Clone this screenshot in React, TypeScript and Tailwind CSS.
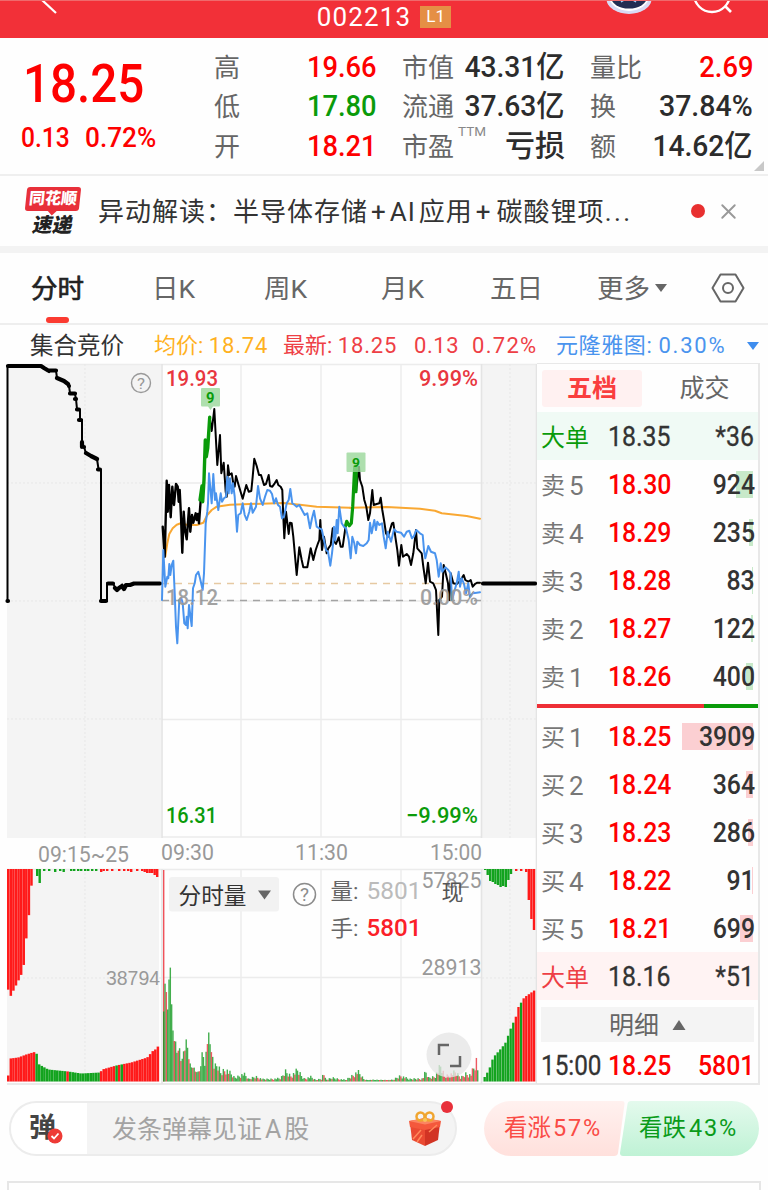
import React from 'react';
import { X } from 'lucide-react';
import clsx from 'clsx';

interface OrderRow {
  label: string;
  level: string;
  price: string;
  volume: string;
  bar: number;
}

const asks: OrderRow[] = [
  { label: '卖', level: '5', price: '18.30', volume: '924', bar: 17 },
  { label: '卖', level: '4', price: '18.29', volume: '235', bar: 4 },
  { label: '卖', level: '3', price: '18.28', volume: '83', bar: 1 },
  { label: '卖', level: '2', price: '18.27', volume: '122', bar: 2 },
  { label: '卖', level: '1', price: '18.26', volume: '400', bar: 7 },
];

const bids: OrderRow[] = [
  { label: '买', level: '1', price: '18.25', volume: '3909', bar: 71 },
  { label: '买', level: '2', price: '18.24', volume: '364', bar: 7 },
  { label: '买', level: '3', price: '18.23', volume: '286', bar: 5 },
  { label: '买', level: '4', price: '18.22', volume: '91', bar: 1 },
  { label: '买', level: '5', price: '18.21', volume: '699', bar: 13 },
];

// Price series are stored at three units per pixel, relative to (originX, 360)
const toPoints = (data: string, originX: number) =>
  data
    .trim()
    .split(/\s+/)
    .map(pair => {
      const [x, y] = pair.split(',').map(Number);
      return `${(originX + x / 3).toFixed(1)},${(360 + y / 3).toFixed(1)}`;
    })
    .join(' ');

const priceA = toPoints(
  '38,500 44,590 50,362 53,455 57,375 62,472 67,380 72,435 78,372 83,380 86,425 89,390 93,470 97,578 101,455 105,510 110,538 117,445 121,515 126,465 130,488 137,460 140,480 144,462 147,490 152,420',
  150
);
const riseA = toPoints('150,420 156,378 158,425 162,360 166,240 169,290 173,265 179,172', 150);
const priceB = toPoints(
  '179,172 185,213 193,147 202,315 210,225 214,340 221,308 227,395 230,410 234,316 238,345 245,340 250,370 254,380 258,348 265,372 278,416 289,375 296,395 304,393 308,350 313,296 320,318 327,345 333,345 342,375 348,372 356,345 360,378 367,380 374,370 380,360 385,375 392,380 397,390 400,470 403,535 408,455 416,522 420,488 425,490 430,530 440,645 448,562 455,600 460,622 472,622 482,565 490,600 497,570 504,550 508,540 511,480 516,570 522,530 530,580 535,565 542,555 548,505 553,545 558,552 566,532 572,560 578,560 586,505',
  150
);
const riseB = toPoints('76,500 80,484 88,497 94,490 98,440 104,320 108,395 109,320', 320);
const priceC = toPoints(
  '108,395 117,320 120,360 127,380 133,420 139,440 145,480 150,460 157,390 161,435 170,432 178,430 182,413 187,450 192,480 198,520 204,530 210,510 216,490 220,488 226,530 232,570 237,617 244,555 249,590 260,582 267,590 273,615 280,580 288,510 292,565 305,580 310,620 317,670 324,608 330,665 340,670 348,690 355,825 358,720 366,710 371,615 377,640 384,670 388,720 392,640 400,670 410,672 418,665 425,655 431,645 436,660 445,665 452,660 458,680 465,672 472,668 480,668',
  320
);
const compareA = toPoints(
  '36,720 40,570 46,680 52,650 55,655 58,612 61,645 65,615 70,602 74,700 78,800 82,850 88,720 94,715 98,730 103,790 108,795 110,770 113,805 117,735 125,798 129,685 134,670 138,645 145,635 150,655 158,690 162,640 167,490 172,455 174,430 177,340 185,430 190,342 195,420 198,400 205,450 212,400 216,425 222,415 228,410 232,350 236,400 240,355 245,400 249,370 254,410 261,515 265,465 272,460 278,430 284,465 290,480 298,455 303,430 308,458 318,440 324,378 330,415 338,435 345,410 352,390 360,392 366,402 372,430 378,415 384,435 390,440 396,475 402,470 410,430 416,420 421,387 427,430 434,435 440,440 448,435 456,450 464,465 472,460 480,505 486,475 492,452 500,500 508,505 515,508 520,530 528,570 534,575 541,617 546,580 550,545 552,500 556,540 560,480 563,520 568,440 575,490 582,500 588,505',
  150
);
const compareB = toPoints(
  '78,505 86,540 92,595 97,530 103,550 108,580 112,545 120,555 130,558 140,550 146,540 150,488 155,520 163,480 168,510 172,485 178,495 186,490 191,530 197,565 203,515 213,545 222,508 230,515 243,518 252,530 260,515 268,512 276,535 282,528 289,510 300,520 308,525 312,570 316,595 325,558 333,575 345,580 350,600 356,650 362,610 367,635 376,622 385,630 392,640 396,720 404,690 410,670 416,635 420,680 425,655 432,672 438,700 445,670 450,712 458,700 470,698 480,697',
  320
);
const averageA = toPoints(
  '46,590 52,550 58,522 68,505 80,494 92,490 110,494 140,495 160,488 172,465 185,450 200,440 240,434 300,432 400,429 450,434 500,440 600,443',
  150
);
const averageB = toPoints('90,443 200,441 300,446 345,452 365,460 440,468 480,476', 320);

const auctionLine =
  '7.5,601 7.5,366 41,366 44,368 48,370.5 56,370.5 57,378 64,381 69,386 70,393 75,394 76,399 77,409 80,410 80,420 82,420 82,442 84,447 86,453 91,456 97,459 98.5,469 101,470 101,601 107,601 107,583.5 113,583.5 116,589 120,588 122,585 124,589 128,585 135,583.5 161,583.5';
const auctionMarks = [
  'M8 366H41L44 368L49 371',
  'M48 370.5H56',
  'M57 378L64 381L68 384',
  'M69 386V386',
  'M70 393.5H75',
  'M75 399H76',
  'M77 409.5H79',
  'M79 420H81',
  'M82 442V447',
  'M84 447V447',
  'M86 453L91 456L97 459',
  'M98 469.5H100',
  'M101 601H106',
  'M108 583.5H113',
  'M115 588L117 590L119 588L122 586L124 589L126 585H130L134 583.5H160',
  'M483 583.5H535',
  'M7.5 601H8',
];

type Anchor = [number, number];

const heightAt = (anchors: Anchor[], x: number) => {
  for (let i = 1; i < anchors.length; i++) {
    const [x1, h1] = anchors[i];
    const [x0, h0] = anchors[i - 1];
    if (x <= x1) return h0 + ((h1 - h0) * (x - x0)) / (x1 - x0);
  }
  return anchors[anchors.length - 1][1];
};

const RED = '#ff1a1a';
const GREEN = '#12a31e';

const volumeAnchors: Anchor[] = [
  [163, 70], [165, 112], [166.5, 60], [168, 98], [169.5, 118], [170.5, 85], [172, 59], [174, 50], [176, 32],
  [178, 43], [181, 18], [183, 34], [186, 44], [190, 15], [192, 18], [196, 9], [200, 14], [202, 40], [204, 15],
  [206, 42], [207.5, 55], [209, 45], [211, 38], [214, 18], [217, 22], [220, 12], [225, 17], [230, 10], [234, 5],
  [243, 10], [248, 3], [255, 7], [262, 3], [280, 4], [285, 14], [290, 8], [297, 15], [303, 4], [310, 6], [315, 2],
  [321, 4], [323, 12], [325, 2], [332, 5], [345, 2], [357, 13], [364, 2], [385, 2], [392, 2], [400, 8], [408, 3],
  [415, 4], [422, 4], [425, 13], [428, 5], [434, 7], [440, 20], [444, 7], [455, 12], [460, 5], [465, 11],
  [470, 9], [474, 20], [476, 27], [478, 6],
];

const volumeBars = Array.from({ length: 238 }, (_, i) => {
  const x = 163 + i * 1.325;
  const noise = ((i * 7919) % 97) / 97;
  const scale = x < 172 ? 1 : x < 212 ? 0.75 + noise * 0.28 : 0.4 + noise * 0.6;
  const green = x < 440 ? noise > 0.42 || i % 5 === 0 : i % 3 === 0;
  return {
    x,
    h: Math.max(1.5, heightAt(volumeAnchors, x) * scale),
    color: green ? '#149a22' : '#e8303a',
  };
});

const auctionTop: Anchor[] = [[7, 117], [10, 128], [15, 118], [20, 108], [23, 101], [25, 80], [28, 50], [30, 38], [32, 3]];
const auctionBase: Anchor[] = [
  [7, 6], [9, 23], [17, 24], [25, 27], [35, 30], [36, 24], [38, 17], [47, 12], [67, 10], [80, 8], [99, 9],
  [101, 12], [115, 16], [130, 19], [146, 24], [152, 31], [156, 33], [158, 39],
];
const closeBase: Anchor[] = [
  [483, 2], [489, 12], [493, 24], [500, 32], [505, 38], [508, 46], [512, 57], [515, 62], [518, 74], [521, 79],
  [524, 84], [534, 91],
];

const auctionBars = Array.from({ length: 59 }, (_, i) => {
  const x = 7 + i * 2.58;
  let color = RED;
  if ((x > 34 && x < 99) || (x > 113 && x < 122)) color = GREEN;
  if ((x > 66 && x < 68.6) || (x > 116 && x < 118.5)) color = RED;
  return { x, h: heightAt(auctionBase, x), color };
});

const closeBars = Array.from({ length: 20 }, (_, i) => {
  const x = 483.5 + i * 2.6;
  const red = (x > 513 && x < 519) || x > 522;
  return { x, h: heightAt(closeBase, x + 1), color: red ? RED : GREEN };
});

const ticks: [number, number, string][] = [
  [36, 7, GREEN], [38.5, 14, GREEN], [43, 2, GREEN], [48, 2, GREEN], [54, 3, GREEN], [59, 2, GREEN], [62.5, 3, GREEN],
  [70, 2, GREEN], [73, 2, GREEN], [77, 2, GREEN], [80, 2, GREEN], [84, 2, GREEN], [87, 2, GREEN], [91, 2, GREEN],
  [95, 2, GREEN], [100, 3, RED], [102.5, 2, RED], [106, 2, RED], [111, 2, RED], [118, 2, RED], [123, 2, RED],
  [127, 2, RED], [130, 3, RED], [136, 2, RED], [141, 2, RED], [143.5, 3, RED], [146, 4, RED], [148.5, 4, RED],
  [151, 4, RED], [153.5, 6, RED], [156, 8, RED],
  [484, 1, GREEN], [486.5, 6, GREEN], [489, 12, GREEN], [491.6, 13, GREEN], [494.2, 15, GREEN], [496.8, 16, GREEN],
  [499.4, 18, GREEN], [502, 17, GREEN], [504.6, 18, GREEN], [507.2, 11, GREEN], [509.8, 5, GREEN], [515, 2, RED],
  [520, 2, RED], [525, 3, RED], [527.6, 31, RED], [530.2, 50, RED], [532.8, 61, RED],
];

interface ChartLabelProps {
  x: number;
  y: number;
  width: number;
  fill: string;
  size?: number;
  weight?: number;
  family?: string;
  children: string;
}

const ChartLabel: React.FC<ChartLabelProps> = ({ x, y, width, fill, size = 22, weight = 400, family, children }) => (
  <text
    x={x}
    y={y}
    textLength={width}
    lengthAdjust="spacingAndGlyphs"
    fill={fill}
    fontSize={size}
    fontWeight={weight}
    fontFamily={family ?? 'Roboto, "Noto Sans CJK SC", sans-serif'}
  >
    {children}
  </text>
);

const PriceChart: React.FC = () => (
  <svg className="block shrink-0" width="537" height="722" viewBox="0 363 537 722" fill="none">
    {/* Panels and grid */}
    <rect x="7" y="364" width="154" height="474" fill="#f4f4f4" />
    <rect x="482" y="364" width="54" height="474" fill="#f4f4f4" />
    <rect x="7" y="869" width="152" height="213" fill="#f4f4f4" />
    <rect x="482" y="869" width="54" height="213" fill="#f4f4f4" />
    <path
      d="M7 364.5H537M162 483H481M162 601H481M162 719.5H481M162 837H481M241 364V837M321 364V837M401 364V837M7 869.5H537M162 977.5H481M241 869V1083M321 869V1083M401 869V1083"
      stroke="#ececec"
      strokeWidth="1.4"
    />
    <path d="M162 364V838M481.5 364V838M162 869V1084M481.5 869V1084M7 1084H537M536.5 364V1084" stroke="#e4e4e4" strokeWidth="1.6" />
    <path
      d="M85 364V838M7 483H161M7 601H161M7 719H161M510 364V838M482 483H536M482 601H536M482 719H536M85 869V1082M7 978H161M510 869V1082M482 978H536"
      stroke="#e7e7e7"
      strokeDasharray="2 2"
    />
    <path d="M162 583.5H481" stroke="#e6c9a2" strokeWidth="1.4" strokeDasharray="7 6" />
    <path d="M162 600.5H481" stroke="#a3a3a3" strokeWidth="1.4" strokeDasharray="7 6" />

    {/* Call auction */}
    <polyline points={auctionLine} stroke="#000" strokeWidth="2" />
    <path d={auctionMarks.join('')} stroke="#000" strokeWidth="4.2" strokeLinecap="round" strokeLinejoin="round" />

    {/* Intraday series */}
    <g strokeLinejoin="round" strokeLinecap="round" strokeWidth="2">
      <polyline points={averageA} stroke="#f9a833" />
      <polyline points={averageB} stroke="#f9a833" />
      <polyline points={priceA} stroke="#000" strokeWidth="2.4" />
      <polyline points={priceB} stroke="#000" />
      <polyline points={priceC} stroke="#000" />
      <polyline points={riseA} stroke="#0a9b0a" strokeWidth="3.4" />
      <polyline points={riseB} stroke="#0a9b0a" strokeWidth="3.2" />
      <polyline points={compareA} stroke="#4a94ee" />
      <polyline points={compareB} stroke="#4a94ee" />
    </g>

    <path d="M202 388H219Q220 388 220 389V405Q220 406.500 219 406.500H213L210.500 410L208 406.500H202Q201 406.500 201 405V389Q201 388 202 388Z" fill="#9ad79a" fillOpacity="0.8" />
    <ChartLabel x={206} y={402.5} width={8.5} size={14} weight={700} fill="#0a9b0a">9</ChartLabel>
    <rect x="346.500" y="452.500" width="19" height="19.500" rx="1" fill="#9ad79a" fillOpacity="0.8" />
    <ChartLabel x={352} y={466.5} width={8} size={13} weight={700} fill="#0a9b0a">9</ChartLabel>

    <circle cx="141" cy="383" r="9.500" stroke="#999" strokeWidth="1.4" />
    <ChartLabel x={137} y={388.5} width={8} size={15} fill="#999">?</ChartLabel>

    {/* Price axis */}
    <ChartLabel x={166} y={386} width={52} weight={500} fill="#e8363f">19.93</ChartLabel>
    <ChartLabel x={419} y={386} width={59} weight={500} fill="#e8363f">9.99%</ChartLabel>
    <g opacity="0.9">
      <ChartLabel x={166} y={604.5} width={52} weight={500} fill="#999">18.12</ChartLabel>
      <ChartLabel x={420} y={604.5} width={58} weight={500} fill="#999">0.00%</ChartLabel>
    </g>
    <ChartLabel x={166} y={823} width={51} weight={500} fill="#0a9b0a">16.31</ChartLabel>
    <ChartLabel x={406} y={823} width={72} weight={500} fill="#0a9b0a">−9.99%</ChartLabel>

    {/* Time axis */}
    <ChartLabel x={38} y={861.5} width={91} fill="#999">09:15~25</ChartLabel>
    <ChartLabel x={161} y={860} width={53} fill="#999">09:30</ChartLabel>
    <ChartLabel x={295} y={860} width={53} fill="#999">11:30</ChartLabel>
    <ChartLabel x={430} y={860} width={52} fill="#999">15:00</ChartLabel>

    {/* Volume */}
    {Array.from({ length: 10 }, (_, i) => 7 + i * 2.58).map(x => (
      <rect key={x} x={x} y="869" width="2.500" height={heightAt(auctionTop, x + 1)} fill={RED} />
    ))}
    {ticks.map(([x, h, color]) => (
      <rect key={x} x={x} y="869" width="2.400" height={h} fill={color} />
    ))}
    {auctionBars.map(b => (
      <rect key={b.x} x={b.x} y={1081.5 - b.h} width="2.500" height={b.h} fill={b.color} />
    ))}
    {closeBars.map(b => (
      <rect key={b.x} x={b.x} y={1081.5 - b.h} width="2.350" height={b.h} fill={b.color} />
    ))}
    <rect x="163" y="870" width="1.400" height="211.500" fill="#f0525a" />
    {volumeBars.map(b => (
      <rect key={b.x} x={b.x} y={1081.5 - b.h} width="1.400" height={b.h} fill={b.color} fillOpacity="0.8" />
    ))}

    <ChartLabel x={106} y={985} width={54} size={19.5} fill="#999" family="Liberation Sans, sans-serif">38794</ChartLabel>
    <ChartLabel x={421.500} y={888} width={60} fill="#999">57825</ChartLabel>
    <ChartLabel x={421.500} y={975} width={60} fill="#999">28913</ChartLabel>

    <rect x="169" y="877" width="110" height="34.500" rx="3" fill="#f2f2f2" />
    <ChartLabel x={178.500} y={903.5} width={68} size={23} fill="#333">分时量</ChartLabel>
    <path d="M258 890.500H271L264.500 899.500Z" fill="#666" />
    <circle cx="304.500" cy="894.500" r="11" stroke="#8c8c8c" strokeWidth="1.5" />
    <ChartLabel x={300} y={901} width={9} size={18} fill="#8c8c8c">?</ChartLabel>
    <ChartLabel x={330.500} y={899} width={28} size={22} fill="#666">量:</ChartLabel>
    <ChartLabel x={366.500} y={899} width={55} size={23} fill="#bbb">5801</ChartLabel>
    <ChartLabel x={441.500} y={899.500} width={22} size={22} fill="#555">现</ChartLabel>
    <ChartLabel x={330.500} y={936} width={28} size={22} fill="#666">手:</ChartLabel>
    <ChartLabel x={366.500} y={936} width={55} size={23} weight={500} fill="#fb2028">5801</ChartLabel>

    <circle cx="449" cy="1055" r="22.500" fill="#e6e6e6" fillOpacity="0.78" />
    <path d="M439 1055V1045H449M460 1056V1066H450" stroke="#666" strokeWidth="2.500" />
  </svg>
);

const StatRow: React.FC<{ label: React.ReactNode; value: string; color?: string; scale?: string }> = ({
  label,
  value,
  color = 'text-[#2c2c2c]',
  scale = 'scale-x-[0.91]',
}) => (
  <div className="flex h-[39.5px] items-center justify-between">
    <span className="relative top-px text-[26px] whitespace-nowrap text-[#666]">{label}</span>
    <span className={clsx('origin-right text-[30px] font-medium whitespace-nowrap', scale, color)}>{value}</span>
  </div>
);

const StockHeader: React.FC = () => (
  <header className="relative flex h-[38px] justify-center overflow-hidden border-t border-[#ef6a6c] bg-[#f23038] pb-[6px] text-white">
    <svg className="absolute top-0 left-10" width="20" height="14" viewBox="0 0 20 14">
      <path d="M2 -1L16 12" stroke="#fff" strokeWidth="2.200" />
    </svg>
    <div className="flex items-center">
      <span className="text-[26px] tracking-[1.1px]">002213</span>
      <span className="ml-[9px] flex h-[22px] w-[31px] items-center justify-center bg-[#e58f45] text-[17px]">L1</span>
    </div>
    <svg className="absolute top-0 right-[26px]" width="136" height="16" viewBox="606 1 136 16" fill="none">
      <ellipse cx="629" cy="-1" rx="22.500" ry="15" fill="#d8daf4" />
      <ellipse cx="629" cy="-4" rx="20" ry="15" fill="#fff" />
      <ellipse cx="629" cy="-3" rx="18" ry="11.500" fill="#232d52" />
      <path d="M621 2L624 0M633 0L636 2" stroke="#9fd0ff" strokeWidth="1.500" />
      <circle cx="712" cy="-6" r="18" stroke="#fff" strokeWidth="2.400" />
      <path d="M725 6L731 12" stroke="#fff" strokeWidth="2.600" />
    </svg>
  </header>
);

const QuoteSummary: React.FC = () => (
  <section className="relative flex h-[138px] border-b-2 border-[#efefef] pt-[9px]">
    <div className="flex w-[214px] shrink-0 flex-col pl-[21px] text-[#fe0000]">
      <span className="mt-[10px] ml-[2px] origin-left scale-x-[0.88] text-[54px] font-medium">18.25</span>
      <div className="mt-[14px] flex text-[27px] font-medium">
        <span className="w-[64px] origin-left scale-x-[0.91]">0.13</span>
        <span className="origin-left scale-x-[0.97]">0.72%</span>
      </div>
    </div>
    <div className="w-[163px]">
      <StatRow label="高" value="19.66" color="text-[#fe0000]" />
      <StatRow label="低" value="17.80" color="text-[#0a9b0a]" />
      <StatRow label="开" value="18.21" color="text-[#fe0000]" />
    </div>
    <div className="ml-[25px] w-[163px]">
      <StatRow label="市值" value="43.31亿" scale="scale-x-[0.94]" />
      <StatRow label="流通" value="37.63亿" scale="scale-x-[0.94]" />
      <StatRow
        label={
          <>
            市盈<sup className="absolute -top-[3px] left-[56px] text-[13.5px] text-[#888]">TTM</sup>
          </>
        }
        value="亏损"
        scale="scale-x-100"
      />
    </div>
    <div className="ml-[25px] w-[163px]">
      <StatRow label="量比" value="2.69" color="text-[#fe0000]" />
      <StatRow label="换" value="37.84%" scale="scale-x-[0.95]" />
      <StatRow label="额" value="14.62亿" scale="scale-x-[0.94]" />
    </div>
    <svg className="absolute right-1 bottom-[3px]" width="10" height="10" viewBox="0 0 10 10">
      <path d="M10 0V10H0Z" fill="#c8c8c8" />
    </svg>
  </section>
);

const NewsBar: React.FC = () => (
  <section className="flex h-[70px] items-center pl-6">
    <div className="flex w-[57px] flex-col items-center">
      <div className="relative flex h-6 w-[54px] -skew-x-6 items-center justify-center rounded-[3px] bg-[#e8303a] text-[16px] font-black text-white">
        同花顺
        <span className="absolute -bottom-[3px] left-[24px] size-[7px] rotate-45 bg-[#e8303a]" />
      </div>
      <span className="mt-[4px] -skew-x-12 text-[20px] font-black text-[#222]">速递</span>
    </div>
    <p className="relative top-px ml-[17px] w-[560px] text-[26px] tracking-[1px] whitespace-nowrap text-[#333]">
      异动解读：半导体存储
      <span className="mr-[3px] ml-[3px]">+</span>AI<span className="ml-[3px]">应用</span>
      <span className="mr-[5px] ml-[3px]">+</span>碳酸锂项<span className="tracking-[2.5px]">...</span>
    </p>
    <span className="ml-[33px] size-[14px] rounded-full bg-[#e83030]" />
    <X className="ml-[11px] text-[#999]" size={25} strokeWidth={1.8} />
  </section>
);

const periods = [
  { name: '分时', width: 'w-[121px]' },
  { name: '日K', width: 'w-[112px]' },
  { name: '周K', width: 'w-[117px]' },
  { name: '月K', width: 'w-[109px]' },
  { name: '五日', width: 'w-[107px]' },
];

const PeriodTabs: React.FC = () => (
  <nav className="flex h-[72px] items-center border-b-2 border-[#eee] pl-[31px] text-[26.500px] text-[#666]">
    {periods.map((p, i) => (
      <div
        key={p.name}
        className={clsx('relative top-px', p.width, i === 0 && 'text-[#222] [-webkit-text-stroke:0.700px_#222]')}
      >
        {p.name}
        {i === 0 && <span className="absolute top-[41px] left-[15px] h-[6px] w-[23px] rounded-full bg-[#fb3b31]" />}
      </div>
    ))}
    <span className="relative top-px">更多</span>
    <svg className="ml-[4px]" width="14" height="10" viewBox="0 0 14 10">
      <path d="M1 1H13L7 9Z" fill="#666" />
    </svg>
    <svg className="ml-[43px]" width="34" height="30" viewBox="0 0 34 30" fill="none" stroke="#666" strokeWidth="2">
      <path d="M9.500 1.500H24.500L32.500 15L24.500 28.500H9.500L1.500 15Z" strokeLinejoin="round" />
      <circle cx="17" cy="15" r="5" />
    </svg>
  </nav>
);

const Legend: React.FC = () => (
  <div className="flex h-[38px] items-center pt-1 pl-[30px] text-[22px] whitespace-nowrap">
    <span className="relative top-px w-[124px] text-[23.500px] text-[#333]">集合竞价</span>
    <span className="w-[129px] text-[#ffb11f]">
      均价: <span className="tracking-[0.800px]">18.74</span>
    </span>
    <span className="w-[131px] text-[#ee3f45]">
      最新: <span className="tracking-[0.800px]">18.25</span>
    </span>
    <span className="w-[58px] tracking-[0.600px] text-[#ee3f45]">0.13</span>
    <span className="w-[84px] tracking-[1.300px] text-[#ee3f45]">0.72%</span>
    <span className="w-[190px] text-[#4a94ee]">
      <span className="tracking-[0.600px]">元隆雅图: </span>
      <span className="tracking-[1.800px]">0.30%</span>
    </span>
    <svg width="14" height="10" viewBox="0 0 14 10">
      <path d="M1 1H13L7 9Z" fill="#3f8dee" />
    </svg>
  </div>
);

const BigOrder: React.FC<{ side: 'ask' | 'bid'; price: string; volume: string }> = ({ side, price, volume }) => (
  <div className={clsx('flex h-12 items-center pt-[3px] pr-[4px] pl-[4px]', side === 'ask' ? 'bg-[#f0faf5]' : 'bg-[#fff3f3]')}>
    <span className={clsx('w-[67px] text-[24px]', side === 'ask' ? 'text-[#0a9b0a]' : 'text-[#ee3f45]')}>大单</span>
    <span className="origin-left scale-x-[0.92] text-[27px] text-[#333] [-webkit-text-stroke:0.300px_#333]">{price}</span>
    <span className="ml-auto origin-right scale-x-[0.92] text-[27px] text-[#333] [-webkit-text-stroke:0.300px_#333]">
      {volume}
    </span>
  </div>
);

const OrderLine: React.FC<{ row: OrderRow; side: 'ask' | 'bid' }> = ({ row, side }) => (
  <div className="relative flex h-12 items-center pt-[3px] pr-[3px] pl-[4px]">
    <span
      className={clsx('absolute top-[11px] right-[5px] h-[27px]', side === 'ask' ? 'bg-[#c8e9c9]' : 'bg-[#fbcfd2]')}
      style={{ width: row.bar }}
    />
    <span className="flex w-[67px] items-center gap-[4px] text-[24px] text-[#777]">
      {row.label}
      <span className="text-[26px]">{row.level}</span>
    </span>
    <span className="origin-left scale-x-[0.92] text-[27px] font-medium text-[#fe0000]">{row.price}</span>
    <span className="relative ml-auto origin-right scale-x-[0.92] text-[27px] font-medium text-[#333]">{row.volume}</span>
  </div>
);

const OrderBook: React.FC = () => (
  <aside className="flex w-[223px] flex-col border-t border-r-2 border-b-2 border-[#e8e8e8]">
    <div className="flex h-12 items-center pl-[5px] text-[25px]">
      <div className="flex h-[37px] w-[100px] items-center justify-center rounded-[3px] bg-[#fff1f1] pt-px font-bold text-[#fa3e3e]">
        五档
      </div>
      <div className="flex-1 pt-px pl-[9px] text-center text-[#666]">成交</div>
    </div>
    <BigOrder side="ask" price="18.35" volume="*36" />
    {asks.map(row => (
      <OrderLine key={row.price} row={row} side="ask" />
    ))}
    <div className="flex h-3 items-center">
      <span className="h-[3.500px] w-[167px] bg-[#ee2f36]" />
      <span className="h-[3.500px] flex-1 bg-[#0a9b0a]" />
    </div>
    {bids.map(row => (
      <OrderLine key={row.price} row={row} side="bid" />
    ))}
    <BigOrder side="bid" price="18.16" volume="*51" />
    <div className="mx-[4px] mt-[7px] flex h-[35px] items-center justify-center gap-[13px] bg-[#f4f4f4] pt-px text-[25px] text-[#666]">
      明细
      <svg width="14" height="10" viewBox="0 0 14 10">
        <path d="M0.500 10H13.500L7 0Z" fill="#666" />
      </svg>
    </div>
    <div className="flex flex-1 items-center pt-[8px] pr-[4px] pl-[4px] text-[27px] font-medium">
      <span className="w-[67px] origin-left scale-x-[0.9] font-normal text-[#333] [-webkit-text-stroke:0.300px_#333]">15:00</span>
      <span className="origin-left scale-x-[0.92] text-[#fe0000]">18.25</span>
      <span className="ml-auto origin-right scale-x-[0.92] text-[#fe0000]">5801</span>
    </div>
  </aside>
);

const GiftIcon: React.FC = () => (
  <svg width="34" height="36" viewBox="0 0 34 36">
    <path d="M2 12L17 15V35L4 29Z" fill="#ea4a32" />
    <path d="M32 12L17 15V35L30 29Z" fill="#d23424" />
    <path d="M1 10L17 7L33 10L32 16L17 19L2 16Z" fill="#f4583c" />
    <path d="M1 10L17 13.500L33 10L17 7Z" fill="#fb8562" />
    <path d="M5 28L13 19M21 21L29 14M9 31L14 24" stroke="#ff8a5c" strokeWidth="1.500" />
    <ellipse cx="12.500" cy="5.500" rx="4" ry="4" fill="none" stroke="#f0a52f" strokeWidth="2.500" />
    <ellipse cx="21.500" cy="5.500" rx="4" ry="4" fill="none" stroke="#f0a52f" strokeWidth="2.500" />
    <circle cx="17" cy="9" r="2" fill="#f7c45a" />
  </svg>
);

const BottomBar: React.FC = () => (
  <footer className="mt-4 flex h-[55px] pl-[9px]">
    <div className="relative flex h-full w-[448px] items-center rounded-full border-2 border-[#ececec] bg-[#f4f4f4]">
      <div className="relative flex h-full w-[76px] items-center rounded-l-full bg-white pl-[18px]">
        <span className="text-[27px] font-bold text-[#444]">弹</span>
        <svg className="absolute top-[25px] left-[36px]" width="16" height="16" viewBox="0 0 16 16">
          <circle cx="8" cy="8" r="7.500" fill="#ee3b36" />
          <path d="M4.500 8L7 10.500L11.500 5.500" stroke="#fff" strokeWidth="1.800" fill="none" />
        </svg>
      </div>
      <span className="relative top-px ml-[25px] text-[25px] text-[#a3a3a3]">
        发条弹幕见证<span className="mx-[3px]">A</span>股
      </span>
      <div className="mr-[13px] ml-auto">
        <GiftIcon />
      </div>
      <span className="absolute -top-[2px] right-[2px] size-[12px] rounded-full bg-[#e8303a]" />
    </div>
    <div className="relative ml-[27px] h-full w-[276px]">
      <svg className="absolute inset-0" width="276" height="55" viewBox="0 0 276 55">
        <defs>
          <linearGradient id="up" x1="0" y1="0" x2="0" y2="1">
            <stop offset="0" stopColor="#fff1ef" />
            <stop offset="1" stopColor="#ffe0dc" />
          </linearGradient>
          <linearGradient id="down" x1="0" y1="0" x2="0" y2="1">
            <stop offset="0" stopColor="#e4faed" />
            <stop offset="1" stopColor="#bff2d5" />
          </linearGradient>
        </defs>
        <path d="M27 0H138Q141 0 140.500 3L134 52Q133.500 55 130 55H27A27 27.500 0 0 1 27 0Z" fill="url(#up)" />
        <path d="M248 0H147Q144 0 143.500 3L136 52Q136 55 139 55H248A27 27.500 0 0 0 248 0Z" fill="url(#down)" />
      </svg>
      <div className="relative flex h-full items-center pt-px text-[23.500px] whitespace-nowrap">
        <span className="w-[135px] pl-[20px] text-[#fa4b45]">
          看涨<span className="ml-[2px] tracking-[1.800px]">57%</span>
        </span>
        <span className="pl-[20px] text-[#0a9b1a]">
          看跌<span className="ml-[3px] tracking-[1.800px]">43%</span>
        </span>
      </div>
    </div>
  </footer>
);

const App: React.FC = () => {
  return (
    <div className="h-[1190px] w-[768px] overflow-hidden bg-[#fefefe] font-[Roboto,'Noto_Sans_CJK_SC',sans-serif] leading-none">
      <StockHeader />
      <QuoteSummary />
      <NewsBar />
      <div className="h-[7px] bg-[#f3f3f3]" />
      <PeriodTabs />
      <Legend />
      <main className="flex h-[722px]">
        <PriceChart />
        <OrderBook />
      </main>
      <BottomBar />
      <div className="mx-[7px] mt-[25px] h-10 border-2 border-[#e6e6e6]" />
    </div>
  );
};

export default App;
